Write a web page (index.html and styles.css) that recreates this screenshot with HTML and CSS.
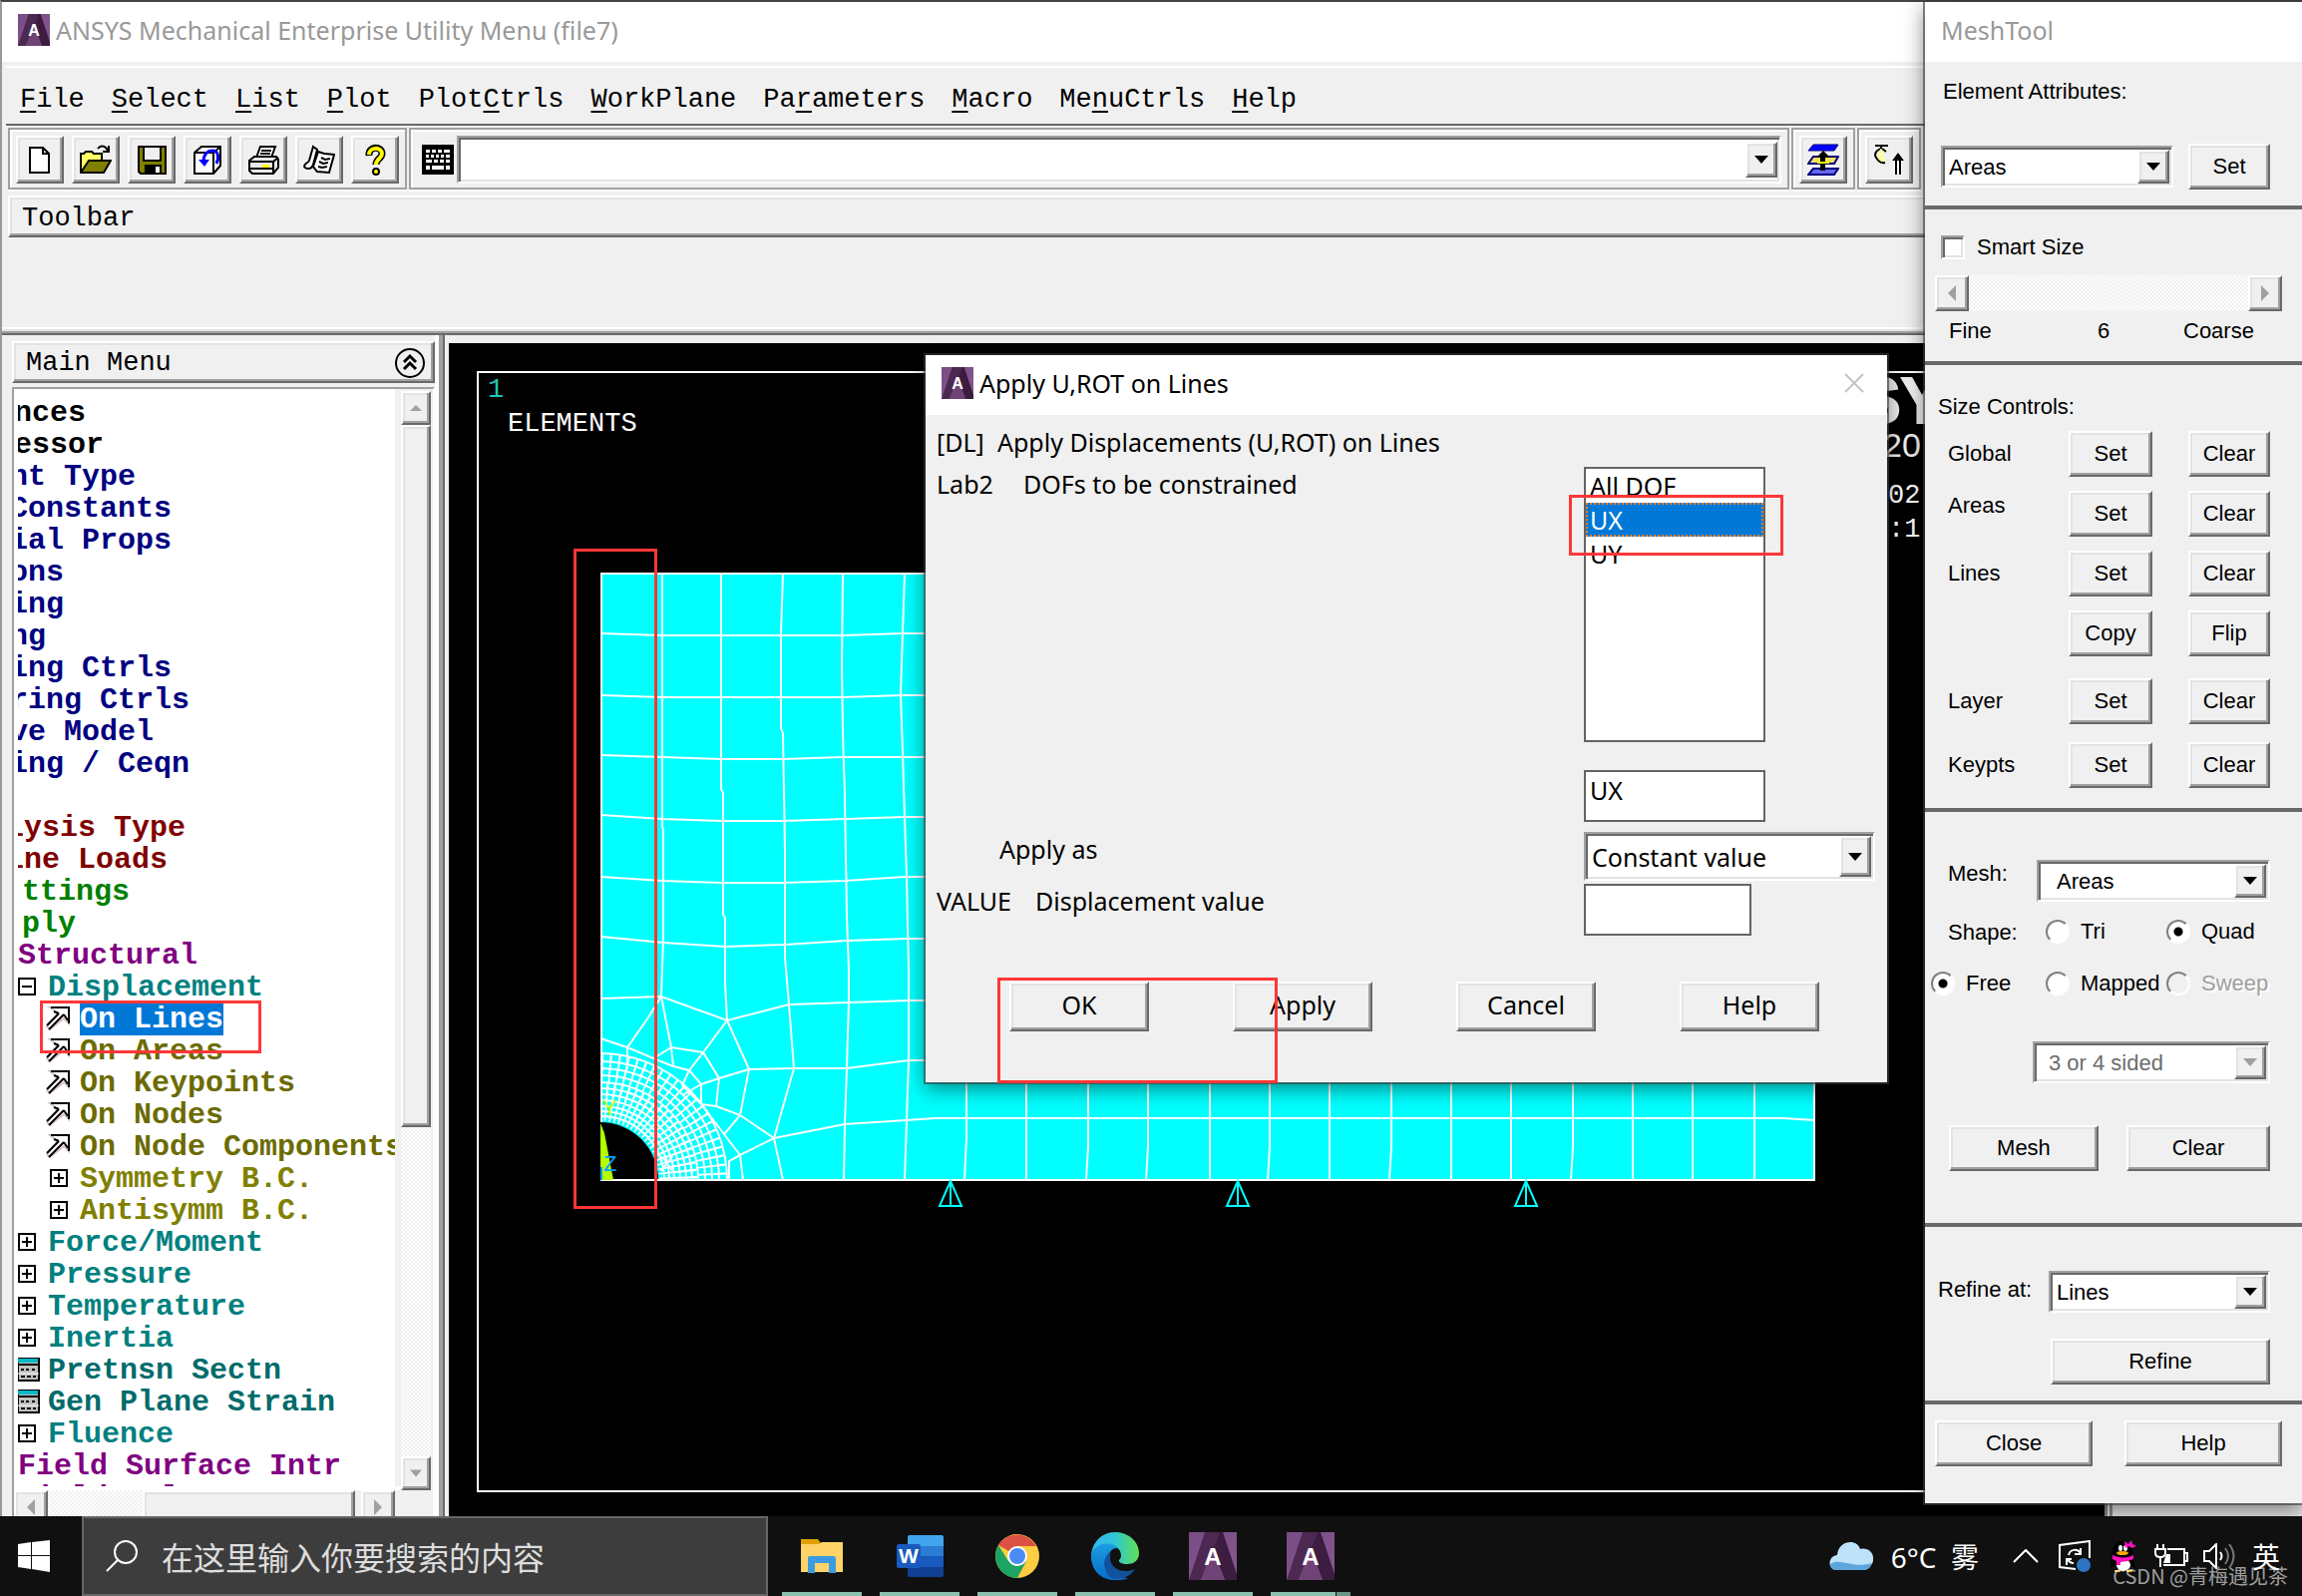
FILE: index.html
```html
<!DOCTYPE html>
<html lang="en">
<head>
  <meta charset="utf-8">
  <title>ANSYS Mechanical Enterprise Utility Menu</title>
  <link rel="stylesheet" href="styles.css">
</head>
<body>

<!-- shared icons -->
<svg class="defs" width="0" height="0">
  <defs>
    <linearGradient id="purple" x1="0" y1="0" x2="1" y2="1">
      <stop offset="0" stop-color="#7a4c86"/>
      <stop offset="1" stop-color="#85588f"/>
    </linearGradient>
    <symbol id="ansys" viewBox="0 0 48 48">
      <rect width="48" height="48" fill="url(#purple)"/>
      <path d="M16 0h15L12 48H0z" fill="#4d2952"/>
      <path d="M31 0h3l14 42v6H36L24 17z" fill="#3c1c41"/>
      <path d="M24 17L36 48H12z" fill="#704377"/>
      <text x="24" y="33" class="logo-letter">A</text>
    </symbol>
    <symbol id="plus" viewBox="0 0 18 18">
      <rect x="1" y="1" width="16" height="16" fill="#fff" stroke="#000" stroke-width="2"/>
      <path d="M4 9h10M9 4v10" stroke="#000" stroke-width="2"/>
    </symbol>
    <symbol id="minus" viewBox="0 0 18 18">
      <rect x="1" y="1" width="16" height="16" fill="#fff" stroke="#000" stroke-width="2"/>
      <path d="M4 9h10" stroke="#000" stroke-width="2"/>
    </symbol>
    <symbol id="pick" viewBox="0 0 24 24">
      <path d="M4 1h19v16l-5-5L4 23l-3-3L12 7z" fill="#fff" stroke="#d8c4c4" stroke-width="2"/>
      <path d="M5 1h18v16M18 8L3 23M13 7L1 19M13 7L8 5M18 8l4 6" fill="none" stroke="#000" stroke-width="2"/>
    </symbol>
    <symbol id="form" viewBox="0 0 22 24">
      <rect x="0" y="0" width="21" height="23" fill="#c0c0c0" stroke="#000" stroke-width="2"/>
      <rect x="0" y="1" width="20" height="4" fill="#00b8c8"/>
      <path d="M0 7h21M3 12h3M8 12h3M14 12h3M3 19h4M9 19h4M15 19h3" stroke="#000" stroke-width="2"/>
      <path d="M0 16h21" stroke="#fff"/>
    </symbol>
    <symbol id="up" viewBox="0 0 12 8"><path d="M0 7L6 1l6 6z"/></symbol>
    <symbol id="down" viewBox="0 0 14 8"><path d="M0 0h14L7 8z"/></symbol>
    <symbol id="left" viewBox="0 0 8 16"><path d="M8 0v16L0 8z"/></symbol>
    <symbol id="right" viewBox="0 0 8 16"><path d="M0 0v16l8-8z"/></symbol>
  </defs>
</svg>

<div class="desktop">

  <main class="app">
    <header class="titlebar">
      <svg class="app-icon"><use href="#ansys"/></svg>
      <span>ANSYS Mechanical Enterprise Utility Menu (file7)</span>
    </header>

    <nav class="menubar">
      <a href="#"><u>F</u>ile</a>
      <a href="#"><u>S</u>elect</a>
      <a href="#"><u>L</u>ist</a>
      <a href="#"><u>P</u>lot</a>
      <a href="#">Plot<u>C</u>trls</a>
      <a href="#"><u>W</u>orkPlane</a>
      <a href="#">Pa<u>r</u>ameters</a>
      <a href="#"><u>M</u>acro</a>
      <a href="#">Me<u>n</u>uCtrls</a>
      <a href="#"><u>H</u>elp</a>
    </nav>

    <div class="toolbar">
      <div class="group">
        <button class="tool" aria-label="New">
          <svg viewBox="0 0 32 32"><path d="M6 4h13l6 6v19H6z" fill="#fff" stroke="#000" stroke-width="2"/><path d="M19 4v6h6" fill="none" stroke="#000" stroke-width="2"/></svg>
        </button>
        <button class="tool" aria-label="Open">
          <svg viewBox="0 0 32 32"><path d="M1 28V10h3l2-2h6l2 2h8v7" fill="#ffff66" stroke="#000" stroke-width="2"/><path d="M1 29L9 17h22l-7 12z" fill="#808000" stroke="#000" stroke-width="2"/><path d="M18 5c3-4 8-3 10 2M29 2v6h-6" fill="none" stroke="#000" stroke-width="2"/></svg>
        </button>
        <button class="tool" aria-label="Save">
          <svg viewBox="0 0 32 32"><path d="M3 3h27v27H5l-2-2z" fill="#808000" stroke="#000" stroke-width="2"/><rect x="8" y="3" width="17" height="14" fill="#f0f0f0" stroke="#000" stroke-width="2"/><rect x="9" y="21" width="17" height="9"/><rect x="20" y="23" width="4" height="6" fill="#fff"/></svg>
        </button>
        <button class="tool" aria-label="Pan Zoom Rotate">
          <svg viewBox="0 0 32 32"><path d="M3 9l7-6h19v19l-7 8H3z" fill="#fff" stroke="#000" stroke-width="2"/><path d="M3 9h19v21M22 9l7-6" fill="none" stroke="#000" stroke-width="2"/><path d="M12 18c0-7 4-11 9-11 6 0 7 7 4 13" fill="none" stroke="#00f" stroke-width="3"/><path d="M7 16h11l-5 7z" fill="#00f"/></svg>
        </button>
        <button class="tool" aria-label="Print">
          <svg viewBox="0 0 32 32"><path d="M9 14l4-11h15l-4 11" fill="#fff" stroke="#000" stroke-width="2"/><path d="M14 7h10M13 10h10" stroke="#000" stroke-width="2"/><path d="M2 17l5-4h22l2 3v8l-5 6H5l-3-3z" fill="#e8e8e8" stroke="#000" stroke-width="2"/><path d="M2 18h24v11M2 25h24M26 18l5-4" fill="none" stroke="#000" stroke-width="2"/><rect x="15" y="21" width="7" height="3" fill="#ff0"/></svg>
        </button>
        <button class="tool" aria-label="Report">
          <svg viewBox="0 0 32 32"><path d="M10 3l4 3-4 15c-1 5-7 5-9 2 0-4 4-3 5-6z" fill="#fff" stroke="#000" stroke-width="2"/><path d="M15 8l6 2 10 1-5 18-12-1-4-5z" fill="#fff" stroke="#000" stroke-width="2"/><path d="M18 14l4 2 5-1M16 18l4 2 5-1M15 23l4 1 5-1" fill="none" stroke="#000" stroke-width="2"/></svg>
        </button>
        <button class="tool" aria-label="Help">
          <svg viewBox="0 0 32 32"><path d="M10 12c-1-10 13-10 13-2 0 5-6 5-6 11" fill="none" stroke="#000" stroke-width="7"/><path d="M10 11c0-8 13-8 13-1 0 5-6 5-6 11" fill="none" stroke="#ff0" stroke-width="4"/><circle cx="17" cy="28" r="3" fill="#ff0" stroke="#000" stroke-width="2"/></svg>
        </button>
      </div>

      <div class="group command">
        <svg class="keyboard" viewBox="0 0 32 30"><rect width="32" height="30"/><path d="M4 5h4v3H4zM10 5h4v3h-4zM16 5h4v3h-4zM22 5h6v3h-6zM4 10h3v3H4zM9 10h3v3H9zM14 10h3v3h-3zM19 10h3v3h-3zM24 10h4v3h-4zM4 15h6v3H4zM12 15h4v3h-4zM18 15h4v3h-4zM24 15h4v3h-4zM4 21h4v4H4zM10 21h12v4H10zM24 21h4v4h-4z" fill="#fff"/></svg>
        <div class="combo wide">
          <input type="text" aria-label="Command">
          <button class="arrow" aria-label="Command history"><svg><use href="#down"/></svg></button>
        </div>
      </div>

      <div class="group">
        <button class="tool" aria-label="Raise hidden">
          <svg viewBox="0 0 32 32"><path d="M6 1h25l-4 6H1z" fill="#00f" stroke="#000080"/><path d="M6 13h25l-4 7H1z" fill="#f0e060" stroke="#000080" stroke-width="2"/><path d="M6 25h25l-4 6H1z" fill="#66e" stroke="#000080" stroke-width="2"/><path d="M16 7l7 7h-5v13h-5V14H9z"/><path d="M10 19h12" stroke="#ff0" stroke-width="2"/></svg>
        </button>
      </div>
      <div class="group">
        <button class="tool" aria-label="Contact manager">
          <svg viewBox="0 0 32 32"><path d="M2 2h13M8 2v3" fill="none" stroke="#000" stroke-width="2"/><path d="M9 5c-6 4-5 12 1 14 3-1 3-3 1-5-2-3-1-6 1-8z" fill="#ffff9a"/><path d="M7 5C2 8 1 11 3 14s4 6 9 5M9 5l4 3" fill="none" stroke="#000" stroke-width="2"/><path d="M25 8l8 9h-4v14h-8V17h-4z" fill="#fff"/><path d="M25 9l6 8H19zM22 14h2v17h-2zM26 14h2v17h-2z"/></svg>
        </button>
      </div>
    </div>

    <div class="caption">Toolbar</div>
    <div class="abbr"></div>

    <div class="panes">
      <aside class="sidebar">
        <div class="menu-head">
          <span>Main Menu</span>
          <button class="collapse" aria-label="Collapse">
            <svg viewBox="0 0 30 30"><circle cx="15" cy="15" r="14" fill="none" stroke="#000" stroke-width="2"/><path d="M9 14l6-6 6 6M9 21l6-6 6 6" fill="none" stroke="#000" stroke-width="3"/></svg>
          </button>
        </div>

        <div class="tree-box">
          <div class="tree-row">
            <ul class="tree">
              <li class="in1">nces</li>
              <li class="in1">essor</li>
              <li class="in2 navy">nt Type</li>
              <li class="in2 navy">Constants</li>
              <li class="in2 navy">ial Props</li>
              <li class="in2 navy">ons</li>
              <li class="in2 navy">ing</li>
              <li class="in2 navy">ng</li>
              <li class="in2 navy">ing Ctrls</li>
              <li class="in2 navy">ring Ctrls</li>
              <li class="in2 navy">ve Model</li>
              <li class="in2 navy">ing / Ceqn</li>
              <li></li>
              <li class="in3 maroon">lysis Type</li>
              <li class="in3 maroon">ine Loads</li>
              <li class="in4 green">ttings</li>
              <li class="in4 green">ply</li>
              <li class="purple">Structural</li>
              <li class="teal"><svg class="box"><use href="#minus"/></svg>Displacement</li>
              <li class="leaf"><svg class="pick"><use href="#pick"/></svg><mark>On Lines</mark></li>
              <li class="leaf"><svg class="pick"><use href="#pick"/></svg>On Areas</li>
              <li class="leaf"><svg class="pick"><use href="#pick"/></svg>On Keypoints</li>
              <li class="leaf"><svg class="pick"><use href="#pick"/></svg>On Nodes</li>
              <li class="leaf"><svg class="pick"><use href="#pick"/></svg>On Node Components</li>
              <li class="sub olive"><svg class="box"><use href="#plus"/></svg>Symmetry B.C.</li>
              <li class="sub olive"><svg class="box"><use href="#plus"/></svg>Antisymm B.C.</li>
              <li class="teal"><svg class="box"><use href="#plus"/></svg>Force/Moment</li>
              <li class="teal"><svg class="box"><use href="#plus"/></svg>Pressure</li>
              <li class="teal"><svg class="box"><use href="#plus"/></svg>Temperature</li>
              <li class="teal"><svg class="box"><use href="#plus"/></svg>Inertia</li>
              <li class="dark-teal"><svg class="form"><use href="#form"/></svg>Pretnsn Sectn</li>
              <li class="dark-teal"><svg class="form"><use href="#form"/></svg>Gen Plane Strain</li>
              <li class="teal"><svg class="box"><use href="#plus"/></svg>Fluence</li>
              <li class="purple">Field Surface Intr</li>
              <li class="purple">Field Volume Intr</li>
            </ul>
            <div class="vscroll">
              <span class="sb off"><svg><use href="#up"/></svg></span>
              <span class="thumb"></span>
              <span class="track"></span>
              <span class="sb off"><svg><use href="#down"/></svg></span>
            </div>
          </div>
          <div class="hscroll">
            <span class="sb off"><svg class="side"><use href="#left"/></svg></span>
            <span class="track"></span>
            <span class="thumb"></span>
            <span class="sb off"><svg class="side"><use href="#right"/></svg></span>
          </div>
        </div>
      </aside>
      <div class="splitter"></div>

      <div class="graphics">
        <svg viewBox="450 344 1660 1176" preserveAspectRatio="xMinYMin slice">
          <defs>
            <clipPath id="quarter"><path d="M602 1054h130v130H602z"/></clipPath>
          </defs>
          <path d="M2100 373H479v1122h1621" fill="none" stroke="#fff" stroke-width="2"/>
          <text x="489" y="398" class="mono" fill="#20c8b0">1</text>
          <text x="509" y="432" class="mono small">ELEMENTS</text>
          <text x="1863" y="424" class="brand">SY</text>
          <text x="1888" y="458" class="rel">20</text>
          <text x="1893" y="504" class="mono small">02</text>
          <text x="1893" y="538" class="mono small">:1</text>

          <rect x="603" y="575" width="1216" height="608" fill="#0ff" stroke="#fff" stroke-width="2"/>
          <g class="mesh">
            <path d="M664 575V829L665 832V940L663 999L650 1020L629 1050L602 1041M663 999L673 1050M723 575V791L725 795V917L727 920V986L729 1023"/>
            <path d="M785 575L783 635V730L785 735L787 853V960L791 1007L796 1071L776 1141L785 1183"/>
            <path d="M845 575L844 667L845 734L847 798L849 917L851 973V1003L849 1071L847 1127L846 1183"/>
            <path d="M907 575L905 635L903 695L905 755L907 819L909 879L911 973V1063L909 1123L907 1183"/>
            <path d="M603 635L664 637H845L905 635H930M603 697L664 699H845L905 697H930M603 757L664 759L723 761H785L845 759H930"/>
            <path d="M603 817L664 821L723 823H785L847 821L907 819H930M603 879L664 883L723 885H785L847 883L907 879H930"/>
            <path d="M603 939L665 945L727 949L787 947L849 943L909 941H930M603 1001L663 999L729 1023L791 1007L851 1005L911 1003H930"/>
            <path d="M729 1023L751 1072L796 1071H849L911 1063H930M776 1141L847 1127L909 1123L938 1121H1788L1819 1123"/>
            <path d="M969 1080V1140L967 1183M1029 1080V1183M1091 1080V1150L1089 1183M1151 1080V1150L1149 1183M1213 1080V1183M1273 1080V1150L1271 1183M1333 1080V1183M1395 1080V1150L1393 1183M1455 1080V1183M1515 1080V1183M1577 1080V1150L1575 1183M1637 1080V1183M1697 1080V1183M1759 1080V1183"/>
            <path d="M629 1050V1072M629 1050L655 1061L673 1050M673 1050L675 1069L691 1073L705 1055L673 1050M655 1061L675 1069M705 1055L729 1023M705 1055L721 1081L751 1072L742 1118L718 1109L721 1081L703 1087L691 1073"/>
            <path d="M703 1087V1107L718 1109M742 1118L726 1137L742 1158L776 1141L742 1118M742 1158L745 1183M742 1158L731 1164V1183M691 1073L684 1088L703 1107L726 1137M703 1087L684 1098"/>
          </g>
          <!-- refined ring round the hole -->
          <g clip-path="url(#quarter)" fill="none" stroke="#fff" stroke-width="2">
            <circle cx="602" cy="1183" r="78" stroke-width="38" stroke-dasharray="2 4"/>
            <circle cx="602" cy="1183" r="112" stroke-width="30" stroke-dasharray="2 6"/>
            <circle cx="602" cy="1183" r="64"/>
            <circle cx="602" cy="1183" r="69"/>
            <circle cx="602" cy="1183" r="74"/>
            <circle cx="602" cy="1183" r="80"/>
            <circle cx="602" cy="1183" r="86"/>
            <circle cx="602" cy="1183" r="92"/>
            <circle cx="602" cy="1183" r="98"/>
            <circle cx="602" cy="1183" r="105"/>
            <circle cx="602" cy="1183" r="112"/>
            <circle cx="602" cy="1183" r="119"/>
            <circle cx="602" cy="1183" r="127"/>
          </g>
          <path d="M602 1183V1125A58 58 0 0 1 660 1183z"/>
          <path d="M602 1183h58" stroke="#fff" stroke-width="2"/>
          <path d="M602 1126l4 10 9 47h-13z" fill="#b4ff00"/>
          <path d="M603 1170v13" stroke="#00a0ff" stroke-width="2"/>
          <text x="604" y="1118" class="axis" fill="#b4ff00">Y</text>
          <text x="605" y="1174" class="axis" fill="#00a0ff">Z</text>
          <text x="661" y="1174" class="axis" fill="#fff">X</text>
          <g fill="none" stroke="#0ff" stroke-width="2">
            <path d="M953 1184l-11 25h22zV1209"/>
            <path d="M1241 1184l-11 25h22zV1209"/>
            <path d="M1530 1184l-11 25h22zV1209"/>
          </g>
        </svg>
      </div>
      <div class="side-strip"></div>
    </div>
  </main>

  <section class="window dialog">
    <header class="titlebar">
      <svg class="app-icon"><use href="#ansys"/></svg>
      <span>Apply U,ROT on Lines</span>
      <button class="close" aria-label="Close"><svg viewBox="0 0 20 20"><path d="M1 1l18 18M19 1L1 19" stroke="#c4c4c4" stroke-width="2"/></svg></button>
    </header>
    <form class="fields">
      <p class="full"><span class="code">[DL]</span>Apply Displacements (U,ROT) on Lines</p>
      <label for="dofs"><span class="code lab">Lab2</span>DOFs to be constrained</label>
      <select id="dofs" class="listbox" size="8">
        <option>All DOF</option>
        <option selected>UX</option>
        <option>UY</option>
      </select>
      <input class="field dof" type="text" value="UX" aria-label="DOF">
      <label class="as" for="applyAs">Apply as</label>
      <div class="combo constant">
        <select id="applyAs"><option>Constant value</option></select>
        <span class="arrow"><svg><use href="#down"/></svg></span>
      </div>
      <label class="val" for="value"><span class="code value">VALUE</span>Displacement value</label>
      <input class="field short" id="value" type="text">
    </form>
    <div class="actions">
      <button>OK</button>
      <button>Apply</button>
      <button>Cancel</button>
      <button>Help</button>
    </div>
  </section>

  <section class="window meshtool">
    <header class="titlebar"><span>MeshTool</span></header>

    <div class="part attributes">
      <label for="attr">Element Attributes:</label>
      <div class="line">
        <div class="combo">
          <select id="attr"><option>Areas</option></select>
          <span class="arrow"><svg><use href="#down"/></svg></span>
        </div>
        <button>Set</button>
      </div>
    </div>

    <div class="part smart">
      <label class="check"><input type="checkbox">Smart Size</label>
      <div class="slider">
        <span class="sb off"><svg class="side"><use href="#left"/></svg></span>
        <span class="track"></span>
        <span class="sb off"><svg class="side"><use href="#right"/></svg></span>
      </div>
      <div class="scale"><span>Fine</span><span>6</span><span>Coarse</span></div>
    </div>

    <div class="part sizes">
      <h2>Size Controls:</h2>
      <div class="size-grid">
        <span>Global</span><button>Set</button><button>Clear</button>
        <span class="top">Areas</span><button>Set</button><button>Clear</button>
        <span>Lines</span><button>Set</button><button>Clear</button>
        <span></span><button>Copy</button><button>Flip</button>
      </div>
      <div class="size-grid loose">
        <span>Layer</span><button>Set</button><button>Clear</button>
        <span>Keypts</span><button>Set</button><button>Clear</button>
      </div>
    </div>

    <div class="part mesher">
      <div class="line">
        <label for="mesh">Mesh:</label>
        <div class="combo indent">
          <select id="mesh"><option>Areas</option></select>
          <span class="arrow"><svg><use href="#down"/></svg></span>
        </div>
      </div>
      <div class="shapes">
        <span class="shape">Shape:</span>
        <label><input type="radio" name="shape">Tri</label>
        <label><input type="radio" name="shape" checked>Quad</label>
        <label><input type="radio" name="mesher" checked>Free</label>
        <label><input type="radio" name="mesher">Mapped</label>
        <label class="disabled"><input type="radio" name="mesher" disabled>Sweep</label>
      </div>
      <div class="combo sided off">
        <select aria-label="Sides" disabled><option>3 or 4 sided</option></select>
        <span class="arrow off"><svg><use href="#down"/></svg></span>
      </div>
      <div class="line pair"><button>Mesh</button><button>Clear</button></div>
    </div>

    <div class="part refine">
      <div class="line">
        <label for="refine">Refine at:</label>
        <div class="combo">
          <select id="refine"><option>Lines</option></select>
          <span class="arrow"><svg><use href="#down"/></svg></span>
        </div>
      </div>
      <button>Refine</button>
    </div>

    <div class="part closing"><button>Close</button><button>Help</button></div>
  </section>

  <!-- highlights -->
  <div class="mark-box mark-tree"></div>
  <div class="mark-box mark-edge"></div>
  <div class="mark-box mark-dof"></div>
  <div class="mark-box mark-ok"></div>

  <footer class="taskbar">
    <button class="start" aria-label="Start">
      <svg viewBox="0 0 32 32"><path d="M0 4l13-2v13H0zM14 2l18-2v15H14zM0 16h13v13L0 27zM14 16h18v16l-18-3z" fill="#fff"/></svg>
    </button>
    <label class="search">
      <svg viewBox="0 0 32 32"><circle cx="20" cy="12" r="11" fill="none" stroke="#fff" stroke-width="2"/><path d="M12 20L1 31" stroke="#fff" stroke-width="2"/></svg>
      <input type="text" placeholder="在这里输入你要搜索的内容" aria-label="搜索">
    </label>
    <div class="tasks">
      <button aria-label="Explorer"><svg viewBox="0 0 48 48"><path d="M3 7h17l3 4h22v10H3z" fill="#e0a000"/><path d="M3 12h18l3-2h21v30H3z" fill="#ffd367"/><path d="M10 41V26q0-2 2-2h24q2 0 2 2v15h-7V31H17v10z" fill="#3c9ae0"/></svg></button>
      <button aria-label="Word"><svg viewBox="0 0 48 48"><path d="M12 5q0-2 2-2h32q2 0 2 2v9H12z" fill="#41a5ee"/><path d="M12 14h36v10H12z" fill="#2b7cd3"/><path d="M12 24h36v11H12z" fill="#185abd"/><path d="M12 35h36v8q0 2-2 2H14q-2 0-2-2z" fill="#103f91"/><rect x="1" y="12" width="24" height="24" rx="2" fill="#185abd"/><text x="13" y="31" class="word-letter">W</text></svg></button>
      <button aria-label="Chrome"><svg viewBox="0 0 48 48"><circle cx="24" cy="24" r="22" fill="#ffcd40"/><path d="M24 24L5 13A22 22 0 0 1 43 14H24z" fill="#dd5144"/><path d="M5 13A22 22 0 0 0 24 46L33 29 15 29z" fill="#1da462"/><circle cx="24" cy="24" r="10" fill="#fff"/><circle cx="24" cy="24" r="8" fill="#4c8bf5"/></svg></button>
      <button aria-label="Edge">
        <svg viewBox="0 0 48 48">
          <defs>
            <linearGradient id="edge1" x1="0" x2="1"><stop offset="0" stop-color="#35b8f5"/><stop offset=".5" stop-color="#2fc6d4"/><stop offset="1" stop-color="#60e050"/></linearGradient>
            <linearGradient id="edge2" x1="0" y1="0" x2="0" y2="1"><stop offset="0" stop-color="#1b9de2"/><stop offset="1" stop-color="#0a6cc8"/></linearGradient>
          </defs>
          <path d="M0 22C2 8 12 0 24 0c14 0 24 10 24 21 0 8-6 11-12 11-5 0-9-2-8-4 3-3 2-6 1-9C25 11 10 10 0 22z" fill="url(#edge1)"/>
          <path d="M0 22C4 11 18 8 27 16c-8-1-12 8-10 16 3 9 10 14 20 14-4 2-8 2-13 2C10 48-1 38 0 22z" fill="url(#edge2)"/>
          <path d="M20 19c-9 6-9 19-1 26 10 5 21-1 25-8-11 5-25 1-25-12 0-2 0-4 1-6z" fill="#12519c"/>
        </svg>
      </button>
      <button aria-label="ANSYS"><svg><use href="#ansys"/></svg></button>
      <button class="stacked" aria-label="ANSYS"><svg><use href="#ansys"/></svg></button>
    </div>
    <div class="tray">
      <svg class="cloud" viewBox="0 0 44 28"><path d="M8 28C-2 28-2 14 8 13 9-2 28-4 31 7c10-3 17 8 11 16-2 4-5 5-9 5z" fill="#bfe2fb"/><path d="M1 22c10-7 22 5 42-1-2 5-5 7-10 7H8c-4 0-7-2-7-6z" fill="#5ba6dc"/></svg>
      <span class="weather">6°C&nbsp; 雾</span>
      <svg class="chevron" viewBox="0 0 26 14"><path d="M1 13L13 1l12 12" fill="none" stroke="#fff" stroke-width="2"/></svg>
      <svg class="sync" viewBox="0 0 32 32"><path d="M17 29L1 27V5l30-4v17" fill="none" stroke="#fff" stroke-width="2"/><path d="M10 15c1-6 9-7 12-2M22 8v6h-6M15 23c-3 0-5-2-6-4M8 25v-6h5" fill="none" stroke="#fff" stroke-width="2"/><circle cx="25" cy="25" r="7" fill="#2f74c0"/></svg>
      <svg class="penguin" viewBox="0 0 26 32"><ellipse cx="12" cy="12" rx="10" ry="11" fill="#000"/><path d="M2 16l-2 12 5-3 3 6h9l3-6 5 3-3-12z" fill="#000"/><ellipse cx="13" cy="25" rx="7" ry="6" fill="#fff"/><ellipse cx="10" cy="8" rx="2" ry="3" fill="#fff"/><ellipse cx="15" cy="8" rx="2" ry="3" fill="#fff"/><ellipse cx="12" cy="13" rx="6" ry="2" fill="#ffa800"/><path d="M2 15q11 5 21 0v4q-6 3-13 3v3H6v-4l-4-2z" fill="#ff10c0"/><path d="M14 1l4 3 3-4 1 4 4 2-5 2-2-2-4 2z" fill="#ff10c0"/><path d="M4 31h6M16 31h6" stroke="#ffa800" stroke-width="2"/></svg>
      <svg class="battery" viewBox="0 0 34 24"><path d="M13 5h17v16H9M31 9h2v8h-2M3 0v5M9 0v5M1 5h10v4q0 4-5 4t-5-4zM6 13v10" fill="none" stroke="#fff" stroke-width="2"/><path d="M12 10h4v9H9z" fill="#fff"/></svg>
      <svg class="volume" viewBox="0 0 34 26"><path d="M1 8h5l7-7v24l-7-7H1z" fill="none" stroke="#fff" stroke-width="2"/><path d="M17 9q3 4 0 8" fill="none" stroke="#fff" stroke-width="2"/><path d="M22 5q6 8 0 16M26 1q9 12 0 24" fill="none" stroke="#777" stroke-width="2"/></svg>
      <span class="ime">英</span>
    </div>
    <span class="watermark">CSDN @青梅遇见茶</span>
  </footer>
</div>

</body>
</html>
```

FILE: styles.css
```css
* {
  box-sizing: border-box;
}

body {
  margin: 0;
  font-family: "Noto Sans", "Noto Sans CJK SC", sans-serif;
  font-size: 25px;
  color: #000;
  background: #000;
}

p, h2, ul {
  margin: 0;
  padding: 0;
}

button, input, select {
  font: inherit;
  color: inherit;
  margin: 0;
}

.defs {
  position: absolute;
}

.desktop {
  position: relative;
  display: flex;
  flex-direction: column;
  height: 100vh;
  overflow: hidden;
}

/* raised and sunken edges */
button, .thumb, .sb, .arrow {
  background: #f0f0f0;
  border: 2px solid;
  border-color: #fff #696969 #696969 #fff;
  border-radius: 0;
  box-shadow: inset -2px -2px #a0a0a0, inset 2px 2px #e3e3e3;
  padding: 0;
}

.combo {
  display: flex;
  background: #fff;
  border: 2px solid;
  border-color: #a0a0a0 #fff #fff #a0a0a0;
  outline: 0;
  box-shadow: inset 2px 2px #696969, inset -2px -2px #e3e3e3;
  padding: 2px;
}

.combo select,
.combo input {
  appearance: none;
  flex: 1;
  min-width: 0;
  border: 0;
  padding: 0 4px;
  background: transparent;
  opacity: 1;
}

.arrow {
  display: flex;
  align-items: center;
  justify-content: center;
  width: 32px;
}

.arrow svg {
  width: 14px;
  height: 8px;
}

.off svg {
  fill: #a0a0a0;
}

.track {
  background: repeating-conic-gradient(#fff 0 25%, #f0f0f0 0 50%) 0 0 / 4px 4px;
}

/* main window */
.app {
  flex: 1;
  min-height: 0;
  display: flex;
  flex-direction: column;
  background: #f0f0f0;
  border-top: 2px solid #444;
  border-left: 2px solid #999;
}

.titlebar {
  display: flex;
  align-items: center;
  gap: 6px;
  height: 60px;
  padding: 0 0 4px 16px;
  background: #fff;
  color: #999;
  flex: none;
}

.app-icon {
  width: 32px;
  height: 32px;
}

.logo-letter {
  font: bold 24px "Liberation Sans", sans-serif;
  fill: #fff;
  text-anchor: middle;
}

.menubar {
  display: flex;
  align-items: center;
  gap: 27px;
  height: 60px;
  margin: 4px 0 2px 4px;
  padding: 8px 0 0 14px;
  border-top: 2px solid #fff;
  border-bottom: 2px solid #696969;
  flex: none;
}

.menubar a,
.caption,
.menu-head {
  font: 27px "Liberation Mono", monospace;
  color: #000;
  text-decoration: none;
}

.menubar u {
  text-underline-offset: 4px;
}

.toolbar {
  display: flex;
  gap: 2px;
  height: 62px;
  margin-left: 6px;
  padding-right: 382px;
  flex: none;
}

.group {
  display: flex;
  align-items: center;
  gap: 8px;
  padding: 2px 6px 0;
  border: 2px solid #a0a0a0;
  box-shadow: inset 2px 2px #fff, 0 2px #fff;
}

.tool {
  display: flex;
  align-items: center;
  justify-content: center;
  width: 48px;
  height: 48px;
}

.tool svg {
  width: 32px;
  height: 32px;
}

.command {
  flex: 1;
  gap: 2px;
  padding-left: 10px;
}

.keyboard {
  width: 34px;
  height: 30px;
}

.combo.wide {
  flex: 1;
  height: 48px;
  padding: 4px 2px;
}

.caption {
  height: 42px;
  margin: 6px 0 0 6px;
  padding-left: 12px;
  line-height: 42px;
  border: 2px solid;
  border-color: #fff #696969 #696969 #fff;
  box-shadow: inset -2px -2px #a0a0a0, inset 2px 2px #e3e3e3;
  flex: none;
}

.abbr {
  height: 98px;
  border-bottom: 2px solid #696969;
  box-shadow: inset 0 -2px #a0a0a0, inset 0 -4px #e3e3e3, inset 0 -6px #fff;
  flex: none;
}

.panes {
  flex: 1;
  min-height: 0;
  display: flex;
}

/* tree */
.sidebar {
  width: 434px;
  padding: 6px 0 0 10px;
  display: flex;
  flex-direction: column;
}

.menu-head {
  display: flex;
  align-items: center;
  justify-content: space-between;
  height: 42px;
  padding: 2px 8px 0 12px;
  border: 2px solid;
  border-color: #fff #696969 #696969 #fff;
  box-shadow: inset -2px -2px #a0a0a0, inset 2px 2px #e3e3e3;
  flex: none;
}

.collapse {
  width: 30px;
  height: 30px;
  background: none;
  border: 0;
  box-shadow: none;
}

.collapse svg {
  display: block;
}

.tree-box {
  flex: 1;
  min-height: 0;
  margin-top: 4px;
  border: 2px solid #a0a0a0;
  border-right-color: #fff;
  border-bottom: 0;
  background: #fff;
  display: flex;
  flex-direction: column;
}

.tree-row {
  flex: 1;
  min-height: 0;
  display: flex;
}

.tree {
  flex: 1;
  margin: 0 0 4px 4px;
  padding-top: 8px;
  overflow: hidden;
  border-right: 6px solid #f0f0f0;
  list-style: none;
  font: bold 30px/32px "Liberation Mono", monospace;
}

.tree li {
  display: flex;
  align-items: center;
  height: 32px;
  white-space: pre;
}

.tree svg {
  flex: none;
  margin-bottom: 2px;
}

.in1 { margin-left: -4px; }
.in2 { margin-left: -8px; }
.in3 { margin-left: -12px; }
.in4 { margin-left: 4px; }
.leaf { margin-left: 28px; color: #6b6b00; }
.sub { margin-left: 32px; }

.navy { color: #000080; }
.maroon { color: #800000; }
.green { color: #008000; }
.purple { color: #800080; }
.teal { color: #008080; }
.dark-teal { color: #006b6b; }
.olive { color: #808000; }

.box {
  width: 18px;
  height: 18px;
  margin-right: 12px;
}

.pick {
  width: 24px;
  height: 24px;
  margin-right: 10px;
}

.form {
  width: 22px;
  height: 24px;
  margin-right: 8px;
}

mark {
  background: #0078d7;
  color: #fff;
}

.vscroll {
  width: 32px;
  display: flex;
  flex-direction: column;
  background: #f0f0f0;
  padding: 2px 2px 0 0;
}

.sb {
  display: flex;
  align-items: center;
  justify-content: center;
  flex: none;
}

.sb svg {
  width: 12px;
  height: 8px;
}

.sb .side {
  width: 8px;
  height: 16px;
}

.vscroll .sb {
  height: 34px;
}

.vscroll .thumb {
  flex: 68;
}

.vscroll .track {
  flex: 32;
}

.hscroll {
  display: flex;
  height: 26px;
  padding-right: 38px;
  background: #f0f0f0;
  overflow: hidden;
}

.hscroll .sb {
  width: 34px;
  height: 34px;
}

.hscroll .thumb {
  flex: 210;
  height: 34px;
  margin-right: 6px;
}

.hscroll .track {
  flex: 96;
}

.splitter {
  width: 10px;
  margin-right: 4px;
  border-left: 4px solid #fff;
  border-right: 2px solid #696969;
  background: #a0a0a0;
}

.graphics {
  flex: 1;
  min-width: 0;
  margin-top: 8px;
  background: #000;
}

.graphics svg {
  display: block;
  width: 100%;
  height: 100%;
}

.side-strip {
  width: 198px;
  border-left: 8px double #888;
  background: #e3e3e3;
}

.mesh path {
  fill: none;
  stroke: #fff;
  stroke-width: 2px;
}

.mono {
  font: 27px "Liberation Mono", monospace;
}

.small {
  fill: #fff;
}

.brand {
  font: bold 64px "Liberation Sans", sans-serif;
  fill: #f0f0f0;
  stroke: #f0f0f0;
  stroke-width: 2px;
}

.rel {
  font: 34px "Liberation Sans", sans-serif;
  fill: #f0f0f0;
}

.axis {
  font: 22px "Liberation Sans", sans-serif;
}

/* floating windows */
.window {
  position: absolute;
  background: #f0f0f0;
  outline: 2px solid rgba(60, 60, 60, 0.6);
  box-shadow: 0 6px 20px rgba(0, 0, 0, 0.5);
}

.dialog {
  left: 928px;
  top: 356px;
  width: 964px;
  height: 729px;
}

.dialog .titlebar {
  color: #000;
}

.close {
  width: 20px;
  height: 20px;
  margin: 0 23px 0 auto;
  background: none;
  border: 0;
  box-shadow: none;
}

.close svg {
  display: block;
}

.fields {
  display: grid;
  grid-template-columns: 649px auto;
  grid-template-rows: 42px 286px 62px 52px 52px;
  padding: 10px 12px 0 11px;
}

.fields > * {
  line-height: 34px;
}

.full {
  grid-column: 1 / 3;
}

.code {
  display: inline-block;
  width: 61px;
}

.lab { width: 87px; }
.value { width: 99px; }

.listbox {
  width: 182px;
  height: 276px;
  padding: 0;
  border: 2px solid #646464;
  border-radius: 0;
  background: #fff;
  overflow: hidden;
}

.listbox option {
  height: 34px;
  min-height: 34px;
  line-height: 34px;
  padding: 0 4px;
}

.listbox option:checked {
  background: #0078d7 linear-gradient(#0078d7, #0078d7);
  color: #fff;
  outline: 2px dotted #f08020;
  outline-offset: -2px;
}

.field {
  width: 182px;
  height: 52px;
  padding: 0 4px 12px;
  border: 2px solid #646464;
  background: #fff;
}

.dof {
  grid-column: 2;
  margin-top: 18px;
}

.as {
  padding: 18px 0 0 63px;
}

.constant {
  width: 292px;
  height: 49px;
  margin-top: 18px;
}

.val {
  padding-top: 18px;
}

.short {
  width: 168px;
  margin-top: 18px;
}

.actions {
  display: flex;
  gap: 84px;
  padding: 64px 0 0 84px;
}

.actions button {
  width: 140px;
  height: 50px;
  padding-bottom: 4px;
}

/* mesh tool */
.meshtool {
  top: 2px;
  right: 0;
  width: 378px;
  height: 1505px;
  font: 22px "Liberation Sans", sans-serif;
}

.meshtool .titlebar {
  font: 25px "Noto Sans", sans-serif;
}

.meshtool button {
  height: 46px;
}

.meshtool .combo {
  height: 42px;
}

.part {
  border-bottom: 4px solid #696969;
}

.line {
  display: flex;
  align-items: center;
}

.attributes {
  height: 148px;
  padding: 18px 32px 0 18px;
}

.attributes label {
  display: block;
  line-height: 24px;
}

.attributes .line {
  gap: 15px;
  margin: 40px 0 0 -2px;
}

.attributes .combo {
  flex: 1;
}

.attributes button {
  width: 82px;
}

.smart {
  height: 156px;
  padding: 24px 20px 0 10px;
}

.check {
  display: flex;
  align-items: center;
  gap: 12px;
  height: 28px;
  margin: 0 0 14px 6px;
}

.check input {
  appearance: none;
  width: 24px;
  height: 24px;
  background: #fff;
  border: 2px solid;
  border-color: #a0a0a0 #fff #fff #a0a0a0;
  box-shadow: inset 2px 2px #696969, inset -2px -2px #e3e3e3;
}

.slider {
  display: flex;
  height: 36px;
}

.slider .sb {
  width: 34px;
}

.slider .track {
  flex: 1;
}

.scale {
  display: grid;
  grid-template-columns: 149px 86px auto;
  padding: 7px 0 0 14px;
}

.sizes {
  height: 448px;
  padding: 30px 32px 0 13px;
}

.sizes h2 {
  font: inherit;
  line-height: 24px;
  margin-bottom: 12px;
}

.size-grid {
  display: grid;
  grid-template-columns: 1fr 84px 82px;
  gap: 14px 36px;
  align-items: center;
  padding-left: 10px;
}

.loose {
  margin-top: 22px;
  row-gap: 18px;
}

.top {
  align-self: start;
  padding-top: 2px;
}

.mesher {
  height: 416px;
  padding: 48px 32px 0 6px;
}

.mesher .line label {
  width: 89px;
  margin: 0 0 14px 17px;
}

.mesher .line .combo {
  flex: 1;
}

.indent select {
  padding-left: 16px;
}

.shapes {
  display: grid;
  grid-template-columns: 115px 121px auto;
  row-gap: 24px;
  margin: 16px -16px 0 0;
}

.shapes label {
  display: flex;
  align-items: center;
  gap: 11px;
  height: 28px;
}

.shape {
  padding: 2px 0 0 17px;
}

.shapes input {
  appearance: none;
  width: 24px;
  height: 24px;
  border: 2px solid;
  border-color: #808080 #fff #fff #808080;
  border-radius: 50%;
  background: #fff;
  flex: none;
}

.shapes input:checked {
  background: radial-gradient(#000 4px, #fff 5px);
}

.shapes input:disabled {
  background: #f0f0f0;
}

.disabled {
  color: #a0a0a0;
  text-shadow: 2px 2px #fff;
}

.sided {
  margin: 44px 0 0 102px;
}

.sided select {
  padding-left: 12px;
  color: #6d6d6d;
}

.pair {
  gap: 28px;
  margin: 42px 0 0 18px;
}

.pair button {
  flex: 150;
}

.pair button + button {
  flex: 144;
}

.refine {
  height: 178px;
  padding: 44px 32px 0 13px;
  text-align: right;
}

.refine .line label {
  width: 111px;
  padding-bottom: 4px;
  text-align: left;
}

.refine .combo {
  flex: 1;
}

.refine > button {
  width: 220px;
  margin-top: 26px;
}

.closing {
  display: flex;
  gap: 32px;
  padding: 16px 20px 0 10px;
  border: 0;
}

.closing button {
  flex: 1;
}

/* highlights */
.mark-box {
  position: absolute;
  border: 3px solid #ff3737;
}

.mark-tree {
  left: 40px;
  top: 1003px;
  width: 222px;
  height: 53px;
}

.mark-edge {
  left: 575px;
  top: 550px;
  width: 84px;
  height: 662px;
}

.mark-dof {
  left: 1573px;
  top: 496px;
  width: 215px;
  height: 61px;
}

.mark-ok {
  left: 1000px;
  top: 980px;
  width: 281px;
  height: 106px;
}

/* taskbar */
.taskbar {
  position: relative;
  display: flex;
  height: 80px;
  background: #101010;
  color: #fff;
  flex: none;
}

.taskbar button {
  background: none;
  border: 0;
  box-shadow: none;
}

.start {
  width: 82px;
  padding: 6px 14px 0 0;
}

.start svg {
  width: 32px;
  height: 32px;
}

.search {
  display: flex;
  align-items: center;
  gap: 24px;
  width: 688px;
  padding-left: 22px;
  background: #3d3d3d;
  border: 2px solid #666;
}

.search svg {
  width: 32px;
  height: 32px;
}

.search input {
  flex: 1;
  border: 0;
  padding: 0;
  background: none;
  font: 32px "Noto Sans CJK SC", sans-serif;
}

.search input::placeholder {
  color: #ddd;
}

.tasks {
  display: flex;
  gap: 18px;
  padding-left: 14px;
}

.taskbar .tasks button {
  width: 80px;
  border-bottom: 4px solid #8bbfae;
  padding-top: 10px;
}

.taskbar .tasks .stacked {
  border-image: linear-gradient(90deg, #8bbfae 78%, #101010 78%, #101010 79%, #6a9585 79%) 4;
  border-width: 0 0 4px;
}

.tasks svg {
  width: 48px;
  height: 48px;
}

.word-letter {
  font: bold 21px "Liberation Sans", sans-serif;
  fill: #fff;
  text-anchor: middle;
}

.tray {
  display: flex;
  align-items: center;
  margin-left: auto;
  padding-right: 22px;
  font: 28px "Noto Sans", "Noto Sans CJK SC", sans-serif;
}

.cloud { width: 44px; height: 28px; margin-right: 18px; }
.weather { margin-right: 34px; }
.chevron { width: 26px; height: 14px; margin-right: 20px; }
.sync { width: 32px; height: 32px; margin-right: 20px; }
.penguin { width: 26px; height: 32px; margin-right: 18px; }
.battery { width: 34px; height: 24px; margin-right: 15px; }
.volume { width: 34px; height: 26px; margin-right: 15px; }

.watermark {
  position: absolute;
  right: 14px;
  bottom: 6px;
  font: 20px "Noto Sans CJK SC", sans-serif;
  color: rgba(255, 255, 255, 0.6);
}
```
